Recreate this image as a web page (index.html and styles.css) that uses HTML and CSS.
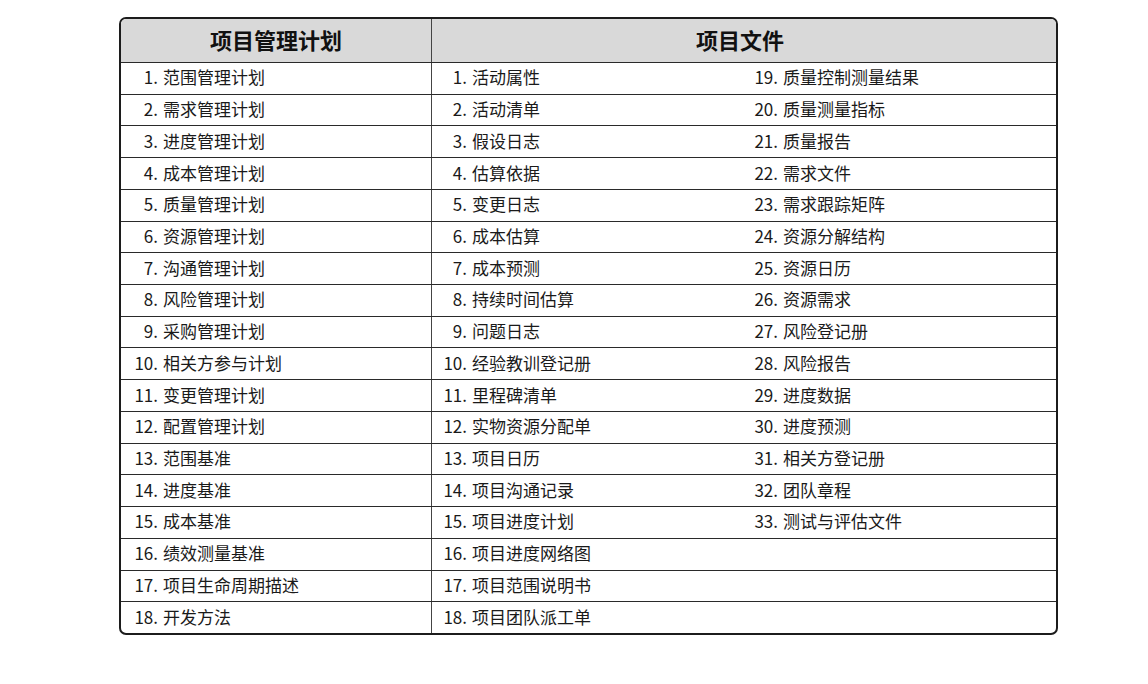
FILE: index.html
```html
<!DOCTYPE html>
<html lang="zh-CN">
<head>
<meta charset="utf-8">
<title>项目管理计划与项目文件</title>
<link rel="stylesheet" href="styles.css">
</head>
<body>
<div class="sheet">
  <div class="head-row">
    <div class="hcell plan">项目管理计划</div>
    <div class="hcell docs">项目文件</div>
  </div>
  <div class="row"><div class="cell plan"><span class="num">1.</span>范围管理计划</div><div class="cell docs"><div class="sub first"><span class="num">1.</span>活动属性</div><div class="sub second"><span class="num">19.</span>质量控制测量结果</div></div></div>
  <div class="row"><div class="cell plan"><span class="num">2.</span>需求管理计划</div><div class="cell docs"><div class="sub first"><span class="num">2.</span>活动清单</div><div class="sub second"><span class="num">20.</span>质量测量指标</div></div></div>
  <div class="row"><div class="cell plan"><span class="num">3.</span>进度管理计划</div><div class="cell docs"><div class="sub first"><span class="num">3.</span>假设日志</div><div class="sub second"><span class="num">21.</span>质量报告</div></div></div>
  <div class="row"><div class="cell plan"><span class="num">4.</span>成本管理计划</div><div class="cell docs"><div class="sub first"><span class="num">4.</span>估算依据</div><div class="sub second"><span class="num">22.</span>需求文件</div></div></div>
  <div class="row"><div class="cell plan"><span class="num">5.</span>质量管理计划</div><div class="cell docs"><div class="sub first"><span class="num">5.</span>变更日志</div><div class="sub second"><span class="num">23.</span>需求跟踪矩阵</div></div></div>
  <div class="row"><div class="cell plan"><span class="num">6.</span>资源管理计划</div><div class="cell docs"><div class="sub first"><span class="num">6.</span>成本估算</div><div class="sub second"><span class="num">24.</span>资源分解结构</div></div></div>
  <div class="row"><div class="cell plan"><span class="num">7.</span>沟通管理计划</div><div class="cell docs"><div class="sub first"><span class="num">7.</span>成本预测</div><div class="sub second"><span class="num">25.</span>资源日历</div></div></div>
  <div class="row"><div class="cell plan"><span class="num">8.</span>风险管理计划</div><div class="cell docs"><div class="sub first"><span class="num">8.</span>持续时间估算</div><div class="sub second"><span class="num">26.</span>资源需求</div></div></div>
  <div class="row"><div class="cell plan"><span class="num">9.</span>采购管理计划</div><div class="cell docs"><div class="sub first"><span class="num">9.</span>问题日志</div><div class="sub second"><span class="num">27.</span>风险登记册</div></div></div>
  <div class="row"><div class="cell plan"><span class="num">10.</span>相关方参与计划</div><div class="cell docs"><div class="sub first"><span class="num">10.</span>经验教训登记册</div><div class="sub second"><span class="num">28.</span>风险报告</div></div></div>
  <div class="row"><div class="cell plan"><span class="num">11.</span>变更管理计划</div><div class="cell docs"><div class="sub first"><span class="num">11.</span>里程碑清单</div><div class="sub second"><span class="num">29.</span>进度数据</div></div></div>
  <div class="row"><div class="cell plan"><span class="num">12.</span>配置管理计划</div><div class="cell docs"><div class="sub first"><span class="num">12.</span>实物资源分配单</div><div class="sub second"><span class="num">30.</span>进度预测</div></div></div>
  <div class="row"><div class="cell plan"><span class="num">13.</span>范围基准</div><div class="cell docs"><div class="sub first"><span class="num">13.</span>项目日历</div><div class="sub second"><span class="num">31.</span>相关方登记册</div></div></div>
  <div class="row"><div class="cell plan"><span class="num">14.</span>进度基准</div><div class="cell docs"><div class="sub first"><span class="num">14.</span>项目沟通记录</div><div class="sub second"><span class="num">32.</span>团队章程</div></div></div>
  <div class="row"><div class="cell plan"><span class="num">15.</span>成本基准</div><div class="cell docs"><div class="sub first"><span class="num">15.</span>项目进度计划</div><div class="sub second"><span class="num">33.</span>测试与评估文件</div></div></div>
  <div class="row"><div class="cell plan"><span class="num">16.</span>绩效测量基准</div><div class="cell docs"><div class="sub first"><span class="num">16.</span>项目进度网络图</div><div class="sub second"></div></div></div>
  <div class="row"><div class="cell plan"><span class="num">17.</span>项目生命周期描述</div><div class="cell docs"><div class="sub first"><span class="num">17.</span>项目范围说明书</div><div class="sub second"></div></div></div>
  <div class="row last"><div class="cell plan"><span class="num">18.</span>开发方法</div><div class="cell docs"><div class="sub first"><span class="num">18.</span>项目团队派工单</div><div class="sub second"></div></div></div>
</div>
</body>
</html>
```

FILE: styles.css
```css
html, body {
  margin: 0;
  padding: 0;
  background: #ffffff;
}

body {
  font-family: "Noto Sans CJK SC", "Liberation Sans", sans-serif;
  color: #111111;
}

.sheet {
  box-sizing: border-box;
  width: 939px;
  margin: 17px 0 0 119px;
  border: 2px solid #1c1c1c;
  border-radius: 7px;
  overflow: hidden;
}

.head-row {
  display: flex;
  height: 44px;
  box-sizing: border-box;
  background: #d9d9d9;
  border-bottom: 1px solid #2a2a2a;
}

.hcell {
  display: flex;
  align-items: center;
  justify-content: center;
  box-sizing: border-box;
  padding-bottom: 4px;
  font-weight: 700;
  font-size: 22px;
  line-height: 1;
  color: #111111;
}

.plan {
  box-sizing: border-box;
  width: 311px;
  flex: none;
  border-right: 1.5px solid #444444;
}

.docs {
  flex: 1;
  display: flex;
}

.hcell.docs {
  padding-right: 8px;
}

.row {
  display: flex;
  box-sizing: border-box;
  height: 31.72px;
  border-bottom: 1px solid #2a2a2a;
  font-size: 17px;
  line-height: 1;
  color: #1a1a1a;
}

.row.last {
  border-bottom: none;
  height: 30.72px;
}

.cell {
  display: flex;
  align-items: center;
  white-space: nowrap;
  box-sizing: border-box;
  padding-bottom: 3px;
}

.cell.docs {
  padding-bottom: 0;
}

.cell.plan {
  padding-left: 13px;
}

.sub {
  display: flex;
  align-items: center;
  white-space: nowrap;
  box-sizing: border-box;
  padding-bottom: 3px;
}

.sub.first {
  width: 308px;
  padding-left: 11px;
}

.sub.second {
  padding-left: 14px;
}

.num {
  display: inline-block;
  width: 24px;
  text-align: right;
  margin-right: 5px;
}
```
